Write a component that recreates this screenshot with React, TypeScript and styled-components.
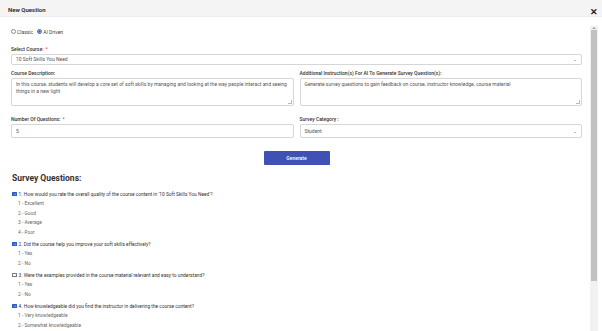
import {FunctionComponent} from "react";
import styled, {createGlobalStyle} from "styled-components";

const GlobalStyle = createGlobalStyle`
  html, body {
    margin: 0;
    padding: 0;
    background: #ffffff;
    font-family: Roboto, "Liberation Sans", sans-serif;
    overflow: hidden;
  }
`;

const SModal = styled.div`
  width: 602px;
  height: 331px;
  display: flex;
  flex-direction: column;
  background: #ffffff;
`;

const SHeader = styled.div`
  height: 17px;
  flex: none;
  display: flex;
  align-items: center;
  justify-content: space-between;
  padding: 2px 4px 0 8px;
  box-sizing: border-box;
  background: #f4f4f4;
  border-bottom: 1px solid #ececec;
`;

const STitle = styled.div`
  font-size: 6px;
  font-weight: 700;
  color: #333;
`;

const SClose = styled.div`
  font-size: 9px;
  font-weight: 700;
  color: #222;
  line-height: 1;
  margin-top: 6px;
`;

const SBody = styled.div`
  flex: 1;
  min-height: 0;
  padding-top: 9px;
  padding-right: 4px;
  display: flex;
`;

const SContent = styled.div`
  flex: 1;
  overflow: hidden;
  padding: 0 8px 0 11px;
`;

// the modal body has its own scrollbar, drawn here
const STrack = styled.div`
  width: 8px;
  flex: none;
  background: #f1f1f1;
  display: flex;
  flex-direction: column;
  align-items: center;
  padding-top: 1px;
`;

const SArrow = styled.div`
  width: 0;
  height: 0;
  border-left: 2px solid transparent;
  border-right: 2px solid transparent;
  border-bottom: 2px solid #a3a3a3;
  margin-bottom: 1px;
`;

const SThumb = styled.div`
  width: 6px;
  height: 251px;
  background: #c1c1c1;
`;

const SRadioRow = styled.div`
  display: flex;
  align-items: center;
  gap: 4px;
  height: 11px;
  font-size: 5px;
  color: #444;
`;

const SRadioLabel = styled.label`
  display: flex;
  align-items: center;
  gap: 1px;
`;

const SRadio = styled.span<{$on?: boolean}>`
  width: 3px;
  height: 3px;
  border-radius: 50%;
  border: 0.6px solid ${p => (p.$on ? "#2f5fc4" : "#8a8a8a")};
  background: ${p => (p.$on ? "radial-gradient(circle, #2f5fc4 45%, #fff 55%)" : "#fff")};
`;

const SField = styled.div`
  display: flex;
  flex-direction: column;
`;

const SLabel = styled.div`
  font-size: 5px;
  font-weight: 500;
  color: #333;
  height: 11px;
  display: flex;
  align-items: center;
`;

const SRequired = styled.span`
  color: #e53935;
  margin-left: 2px;
`;

const SBox = styled.div<{$h: number}>`
  height: ${p => p.$h}px;
  box-sizing: border-box;
  border: 1px solid #d6d6d6;
  border-radius: 2px;
  font-size: 5px;
  color: #555;
  padding: 2px 4px;
  display: flex;
  align-items: ${p => (p.$h > 20 ? "flex-start" : "center")};
  justify-content: space-between;
  line-height: 7px;
  position: relative;
`;

const SChevron = styled.span`
  font-size: 5px;
  color: #666;
`;

const SResize = styled.span`
  position: absolute;
  right: 1px;
  bottom: 1px;
  width: 3px;
  height: 3px;
  border-right: 1px solid #bbb;
  border-bottom: 1px solid #bbb;
`;

const SGrid = styled.div`
  display: grid;
  grid-template-columns: 1fr 1fr;
  column-gap: 6px;
  row-gap: 7px;
`;

const SActions = styled.div`
  display: flex;
  justify-content: center;
  padding-top: 13px;
`;

const SButton = styled.button`
  width: 66px;
  height: 14px;
  border: none;
  border-radius: 1px;
  background: #3f51b5;
  color: #fff;
  font-family: inherit;
  font-size: 5px;
  font-weight: 500;
  padding: 0;
`;

const SHeading = styled.h2`
  margin: 8px 0 6px 1px;
  font-size: 8.5px;
  line-height: 10px;
  font-weight: 700;
  color: #333;
`;

const SQuestion = styled.div`
  margin-bottom: 2px;
`;

const SQuestionRow = styled.label`
  display: flex;
  align-items: center;
  gap: 2px;
  height: 10px;
  padding-left: 1px;
  font-size: 4.85px;
  color: #333;
`;

const SCheck = styled.span<{$on: boolean}>`
  width: 4.5px;
  height: 4.5px;
  box-sizing: border-box;
  border-radius: 0.5px;
  border: 0.6px solid ${p => (p.$on ? "#2f5fc4" : "#777")};
  background: ${p => (p.$on ? "#2f5fc4" : "#fff")};
  color: #fff;
  font-size: 4px;
  line-height: 3.5px;
  text-align: center;
  overflow: hidden;
`;

const SOption = styled.div`
  height: 9.5px;
  display: flex;
  align-items: center;
  padding-left: 7px;
  font-size: 4.85px;
  color: #666;
`;

const questions = [
    {
        text: "1. How would you rate the overall quality of the course content in '10 Soft Skills You Need'?",
        checked: true,
        options: ["1 - Excellent", "2 - Good", "3 - Average", "4 - Poor"],
    },
    {
        text: "2. Did the course help you improve your soft skills effectively?",
        checked: true,
        options: ["1 - Yes", "2 - No"],
    },
    {
        text: "3. Were the examples provided in the course material relevant and easy to understand?",
        checked: false,
        options: ["1 - Yes", "2 - No"],
    },
    {
        text: "4. How knowledgeable did you find the instructor in delivering the course content?",
        checked: true,
        options: ["1 - Very knowledgeable", "2 - Somewhat knowledgeable", "3 - Not very knowledgeable", "4 - Not knowledgeable at all"],
    },
];

const App: FunctionComponent = () => {
    return (
        <>
            <GlobalStyle/>
            <SModal>
                <SHeader>
                    <STitle>New Question</STitle>
                    <SClose>✕</SClose>
                </SHeader>
                <SBody>
                    <SContent>
                        <SRadioRow>
                            <SRadioLabel><SRadio/>Classic</SRadioLabel>
                            <SRadioLabel><SRadio $on/>AI Driven</SRadioLabel>
                        </SRadioRow>
                        <SField style={{marginTop: 6}}>
                            <SLabel>Select Course:<SRequired>*</SRequired></SLabel>
                            <SBox $h={11}>10 Soft Skills You Need<SChevron>⌄</SChevron></SBox>
                        </SField>
                        <SGrid style={{marginTop: 2}}>
                            <SField>
                                <SLabel>Course Description:</SLabel>
                                <SBox $h={28}>
                                    In this course, students will develop a core set of soft skills by managing and looking at the way people interact and seeing things in a new light
                                    <SResize/>
                                </SBox>
                            </SField>
                            <SField>
                                <SLabel>Additional Instruction(s) For AI To Generate Survey Question(s):</SLabel>
                                <SBox $h={28}>
                                    Generate survey questions to gain feedback on course, instructor knowledge, course material
                                    <SResize/>
                                </SBox>
                            </SField>
                            <SField>
                                <SLabel>Number Of Questions:<SRequired>*</SRequired></SLabel>
                                <SBox $h={14}>5</SBox>
                            </SField>
                            <SField>
                                <SLabel>Survey Category :</SLabel>
                                <SBox $h={14}>Student<SChevron>⌄</SChevron></SBox>
                            </SField>
                        </SGrid>
                        <SActions>
                            <SButton>Generate</SButton>
                        </SActions>
                        <SHeading>Survey Questions:</SHeading>
                        {questions.map((q) => (
                            <SQuestion key={q.text}>
                                <SQuestionRow>
                                    <SCheck $on={q.checked}>{q.checked ? "✓" : ""}</SCheck>
                                    {q.text}
                                </SQuestionRow>
                                {q.options.map((o) => <SOption key={o}>{o}</SOption>)}
                            </SQuestion>
                        ))}
                    </SContent>
                    <STrack>
                        <SArrow/>
                        <SThumb/>
                    </STrack>
                </SBody>
            </SModal>
        </>
    );
};

export default App;
